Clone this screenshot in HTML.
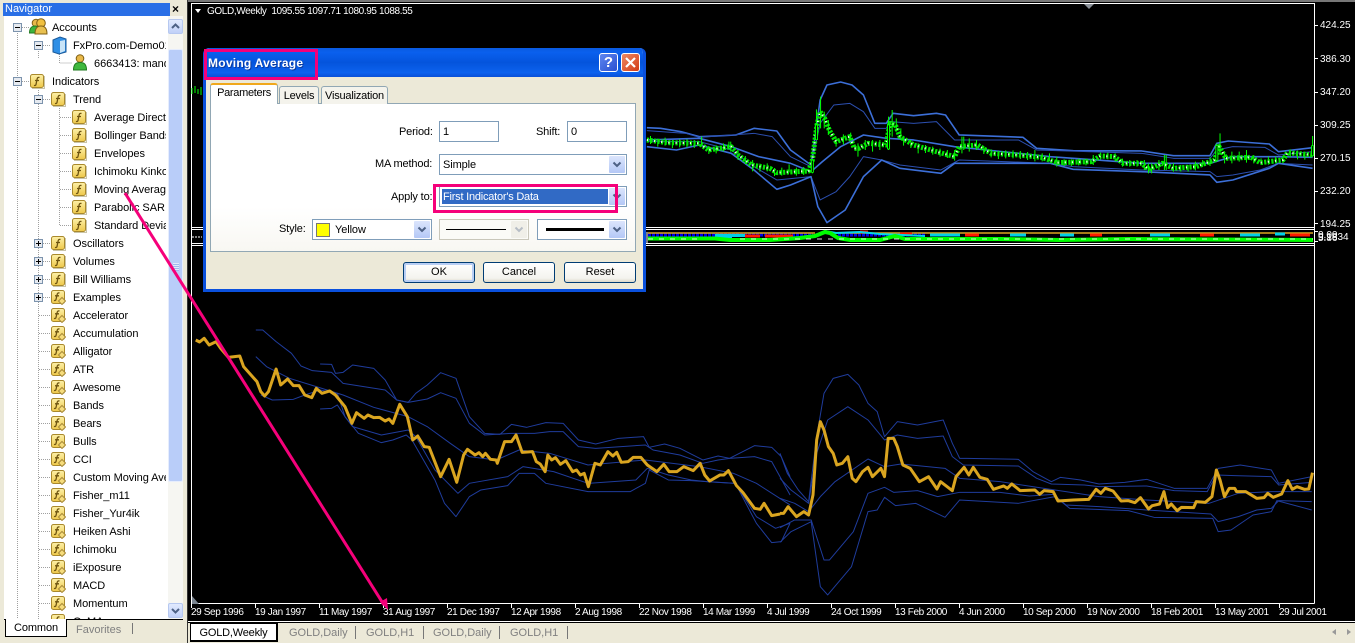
<!DOCTYPE html>
<html><head><meta charset="utf-8"><title>Moving Average</title>
<style>
html,body{margin:0;padding:0;background:#000;width:1355px;height:643px;overflow:hidden}
body{position:relative;font-family:"Liberation Sans",sans-serif;font-size:11px;color:#000}
.a{position:absolute;white-space:nowrap}
#nav{position:absolute;left:0;top:0;width:188px;height:643px;background:#ece9d8;overflow:hidden}
#tree{position:absolute;left:4px;top:16px;width:179px;height:603px;background:#fff;overflow:hidden}
.r{position:absolute;white-space:nowrap;line-height:14px;height:15px;margin-top:1px;overflow:hidden;letter-spacing:-.05px}
.w{color:#fff;font-size:10px;line-height:12px;letter-spacing:-.38px}
.n{color:#fff;font-size:10px;line-height:12px}
.p{stroke-linejoin:round;fill:none;vector-effect:non-scaling-stroke}
.o{stroke:#daa520;stroke-width:3}
.b{stroke:#1f3c9c;stroke-width:1}
.t{stroke:#3c6fd8;stroke-width:1.6}
.t2{stroke:#2c4fb0;stroke-width:1}
.tab{position:absolute;font-size:11px;line-height:14px;white-space:nowrap}
.in{position:absolute;background:#fff;border:1px solid #7f9db9;box-sizing:border-box;font-size:11px;line-height:20px;padding-left:3px;height:21px;letter-spacing:-.1px}
.ar{position:absolute;right:1px;top:1px;width:16px;height:17px;background:linear-gradient(#dbe5fc,#b4c8f6);border-radius:1px}
.btn{position:absolute;top:262px;width:72px;height:21px;box-sizing:border-box;border:1px solid #003c74;border-radius:3px;background:linear-gradient(#fff,#f4f3ee 80%,#dcd8ca);text-align:center;line-height:19px;font-size:11px}
.lb{position:absolute;font-size:11px;line-height:14px;text-align:right;white-space:nowrap;letter-spacing:-.15px}
</style></head><body>
<svg width="0" height="0" style="position:absolute">
<defs>
<linearGradient id="gy" x1="0" y1="0" x2="0" y2="1"><stop offset="0" stop-color="#fdf0a8"/><stop offset="1" stop-color="#eec84a"/></linearGradient>
<symbol id="f" viewBox="0 0 15 15"><rect x=".5" y=".5" width="13" height="13" rx="2" fill="url(#gy)" stroke="#a9892c"/><path d="M14.500 2V14.500H2" fill="none" stroke="#c9c4a8"/><path d="M9.500 3.500C8 3 7.300 3.800 7 5.500L6 10.500C5.800 11.500 5 11.700 4 11.400M5 6.500H9" fill="none" stroke="#6e5410" stroke-width="1.300"/></symbol>
<symbol id="fd" viewBox="0 0 15 15"><rect x=".5" y=".5" width="13" height="13" rx="2" fill="url(#gy)" stroke="#a9892c"/><path d="M8.500 3C7 2.600 6.300 3.400 6 5L5 9.500C4.800 10.500 4 10.700 3 10.400M4 5.800H8" fill="none" stroke="#6e5410" stroke-width="1.300"/><path d="M11 7.500L14.500 11 11 14.500 7.500 11Z" fill="#f6dc7c" stroke="#a88a3a"/></symbol>
<symbol id="chev" viewBox="0 0 16 17"><path d="M4.500 6.500L8 10 11.500 6.500" fill="none" stroke="#4d6185" stroke-width="2"/></symbol>
</defs></svg>

<!-- chart -->
<svg class="a" style="left:188px;top:0" width="1167" height="643" viewBox="188 0 1167 643">
<rect x="188" y="0" width="1167" height="643" fill="#000"/>
<rect x="188" y="0" width="1167" height="2" fill="#777"/>
<g stroke="#fff" stroke-width="1" fill="none" shape-rendering="crispEdges">
<path d="M191 3.500H1314.500V603.500M191.500 3V603.500H1314.500M191 227.500H1314M191 229.500H1314M191 243.500H1314M191 245.500H1314"/>
<path d="M1314 25.500h4M1314 58.500h4M1314 92.500h4M1314 125.500h4M1314 158.500h4M1314 191.500h4M1314 223.500h4M1314 231.500h4M1314 241.500h4"/>
<path d="M191.500 604v4M255.500 604v4M319.500 604v4M383.500 604v4M447.500 604v4M511.500 604v4M575.500 604v4M639.500 604v4M703.500 604v4M767.500 604v4M831.500 604v4M895.500 604v4M959.500 604v4M1023.500 604v4M1087.500 604v4M1151.500 604v4M1215.500 604v4M1279.500 604v4"/>
<path d="M188 621.500H1355"/>
</g>
<path d="M1084 4h10l-5 5z" fill="#8a9098"/>
<path d="M192 596v8h7z" fill="#7b8590"/>
<path d="M195 9h6l-3 4z" fill="#fff"/>

<!-- top candles left bit -->
<path d="M192 88v6M195 86v7M198 89v5M201 87v8" stroke="#00ff00" stroke-width="1"/>

<!-- top panel -->
<g transform="translate(640,0) scale(.456,.3333)">
<polyline class="p t" points="15,383 45,385 90,395 130,410 170,408 210,405 250,385 300,393 330,450 375,495 385,400 395,300 410,255 440,246 465,255 490,285 515,370 540,370 555,340 600,347 650,340 670,345 700,405 760,408 840,412 870,445 950,452 1100,453 1170,467 1250,467 1265,430 1290,423 1380,432 1400,455 1475,443"/>
<polyline class="p t2" points="15,392 100,400 130,412 250,400 290,410 330,470 375,500 395,370 425,315 460,310 490,335 515,385 540,385 550,365 600,370 650,365 690,420 830,420 870,450 1100,460 1170,475 1250,475 1265,450 1300,440 1370,442 1400,465 1475,455"/>
<polyline class="p t" points="15,420 130,415 200,440 260,470 330,490 375,515 400,485 440,440 490,405 540,415 600,420 690,440 760,450 900,470 1000,480 1100,490 1250,490 1300,470 1400,470 1475,472"/>
<polyline class="p t2" points="15,425 130,425 200,450 250,500 300,540 375,530 395,600 430,575 460,530 490,470 530,480 570,495 660,510 700,480 800,485 900,490 950,500 1100,510 1250,515 1265,530 1300,525 1360,510 1400,490 1475,495"/>
<polyline class="p t" points="15,440 80,450 130,435 200,460 250,510 300,568 330,555 375,530 390,620 410,668 450,630 490,530 530,480 570,505 660,520 690,490 900,490 950,508 1100,515 1250,525 1265,547 1300,540 1380,505 1400,490 1475,505"/>
<path class="p" stroke="#00ff00" stroke-width="1" d="M23 408V432M39 416V440M55 413V437M71 420V444M87 418V442M103 418V442M119 420V444M135 410V440M151 438V462M167 436V460M183 430V454M199 425V455M215 450V480M231 468V492M247 480V514M263 491V515M279 490V514M295 504V528M311 503V527M327 493V517M343 503V527M359 501V525M430 410V440M446 403V433M462 398V422M478 430V470M494 420V450M510 420V455M526 420V450M578 413V437M594 420V444M610 430V460M626 435V459M642 440V464M658 446V470M674 450V474M690 450V482M706 410V460M722 415V455M738 420V450M754 438V462M770 448V472M786 453V477M802 451V475M818 451V475M834 453V477M850 456V480M866 450V484M882 460V484M898 460V484M914 470V500M930 478V498M946 478V498M962 476V496M978 476V496M994 465V495M1010 458V478M1026 458V478M1042 460V484M1058 476V500M1074 480V500M1090 480V500M1106 480V510M1122 490V520M1138 480V510M1154 465V510M1170 490V515M1186 495V515M1202 495V515M1218 485V511M1234 480V500M1250 472V498M1282 455V490M1298 455V490M1314 455V485M1330 450V488M1346 465V490M1362 475V495M1378 470V494M1394 470V490M1410 470V490M1426 448V472M1442 452V478M1458 455V479"/>
<polyline class="p" stroke="#00e800" stroke-width="5" stroke-dasharray="2.200 1.400" points="15,420 60,428 130,430 150,450 200,440 215,465 245,495 285,505 300,518 370,513 378,480 388,375 395,335 405,355 415,390 430,425 460,410 470,445 480,445 500,430 540,435 548,370 560,375 570,410 600,435 650,455 690,470 700,440 740,435 770,460 830,465 880,472 915,488 990,485 1010,468 1040,470 1060,490 1100,490 1115,508 1145,490 1170,505 1220,500 1260,480 1270,440 1285,475 1340,472 1360,488 1410,480 1420,458 1475,465"/>
<polyline class="p" stroke="#e8ffe8" stroke-width="2" stroke-dasharray="1.200 6" points="15,420 60,428 130,430 150,450 200,440 215,465 245,495 285,505 300,518 370,513 378,480 388,375 395,335 405,355 415,390 430,425 460,410 470,445 480,445 500,430 540,435 548,370 560,375 570,410 600,435 650,455 690,470 700,440 740,435 770,460 830,465 880,472 915,488 990,485 1010,468 1040,470 1060,490 1100,490 1115,508 1145,490 1170,505 1220,500 1260,480 1270,440 1285,475 1340,472 1360,488 1410,480 1420,458 1475,465"/>
<path class="p" stroke="#00ff00" stroke-width="1" d="M378 478V520M387 328V420M396 290V385M404 335V385M413 360V405M545 350V450M553 330V410M562 355V395M572 385V420M1115 490V520M1150 465V510M1272 400V465M1265 430V485M1475 408V470M710 410V450M195 425V445"/>
<path class="p" stroke="#00ff00" stroke-width="3" d="M378 480V518M387 372V420M545 372V448M1265 435V482M1475 436V468"/>
<path class="p" stroke="#000" stroke-width="1" d="M378 482V516M387 376V418M545 376V446M1265 438V480M1475 438V466"/>
</g>

<!-- indicator panel -->
<g fill="none">
<path d="M648 234.500H813" stroke="#0000e8" stroke-width="4" stroke-dasharray="3 1"/>
<path d="M838 234.500H925" stroke="#0000e8" stroke-width="4" stroke-dasharray="3 1"/>
<path d="M648 233H815M835 233H1313" stroke="#daa520" stroke-width="1.500"/>
<path d="M715 235.500h30M720 237h12M752 236h8M930 235h30M1010 235h16M1060 235h14M1150 235h20M1240 235h20M1275 234h10" stroke="#00d0e8" stroke-width="3"/>
<path d="M745 236h15M765 236h28M860 232h8M900 234h12M965 235h14M1090 235h12M1200 235h14M1290 235h20" stroke="#ff1a00" stroke-width="3"/>
<path d="M810 237L825 231 836 233 860 232 880 234 925 236" stroke="#00d8e8" stroke-width="2"/>
<path d="M648 238.500H715L730 240H770L800 238 815 236 825 232 830 233 838 238 850 240 880 240 895 236 905 239 1000 239 1060 240 1130 239 1313 240" stroke="#00ff00" stroke-width="4"/>
<path d="M648 239H700M740 239H1313" stroke="#fff" stroke-width="1" stroke-dasharray="5 6" opacity=".85"/>
<path d="M647 243V232" stroke="#fff" stroke-width="1"/>
<path d="M192 237h10" stroke="#fff" stroke-width="1" stroke-dasharray="2 1"/>
</g>

<!-- main panel left -->
<g transform="translate(190,320) scale(.3827,.3333)">
<polyline class="p b" points="172,30 190,30 225,65 265,100 290,138 320,152 370,157 400,190 510,210 540,240 570,247 620,237 655,218 695,235 730,310 770,345 840,340 900,340 940,335 975,335 1015,380 1060,385 1190,375 1210,390 1280,405 1340,430 1380,420 1410,415 1475,410 1520,425 1568,525"/>
<polyline class="p b" points="340,132 370,133 380,160 400,157 425,135 480,145 510,180 540,240 570,247 590,220 620,195 655,158 695,175 730,290 770,340 810,343 840,313 880,322 930,308 975,310 1015,360 1060,372 1120,355 1185,350 1200,382 1240,372 1280,385 1340,420 1380,408 1410,415 1475,377 1520,382 1545,410 1568,470"/>
<polyline class="p b" points="172,110 200,140 260,175 330,200 400,225 480,262 570,290 620,320 680,370 730,410 800,420 860,390 940,400 1040,435 1190,420 1330,440 1420,460 1480,490 1568,555"/>
<polyline class="p b" points="185,225 215,240 270,238 300,225 340,210 385,220 405,290 425,320 500,345 570,330 590,350 640,450 700,520 730,490 830,470 870,440 950,455 1040,490 1165,480 1195,445 1250,465 1310,480 1350,485 1425,490 1480,590 1530,625 1568,610"/>
<polyline class="p b" points="340,267 370,265 385,255 405,290 440,340 500,368 530,360 565,345 580,360 640,480 665,550 695,590 730,530 760,510 830,497 860,460 900,460 930,490 1040,515 1150,515 1190,490 1200,450 1250,480 1310,482 1350,485 1425,490 1480,610 1520,668 1545,665 1568,610"/>
<polyline class="p o" points="15,60 25,66 37,55 50,75 68,65 80,85 100,112 130,108 140,140 175,185 185,215 195,228 205,215 225,147 237,195 255,177 270,197 285,197 300,225 318,233 330,205 345,220 365,213 380,225 405,260 423,310 435,278 455,295 465,285 480,293 495,292 510,303 520,297 530,310 548,253 568,290 582,360 595,348 612,380 625,382 655,470 677,418 697,487 715,405 725,388 745,405 755,398 765,410 772,400 785,418 800,420 803,430 822,365 840,365 852,345 868,397 895,395 905,425 915,432 928,455 935,405 945,420 955,413 968,433 982,422 1000,455 1010,450 1020,465 1030,460 1041,500 1058,430 1072,435 1092,395 1105,408 1115,397 1127,427 1145,425 1158,412 1178,412 1195,435 1220,455 1238,433 1252,455 1272,455 1290,440 1315,452 1333,430 1345,465 1358,483 1385,465 1395,465 1407,452 1428,497 1445,518 1475,565 1490,568 1500,550 1520,587 1542,582"/>
</g>
<!-- main panel right -->
<g transform="translate(780,360) scale(.3667,.3333)">
<polyline class="p b" points="0,280 20,340 50,390 78,425 100,230 120,100 145,55 185,43 215,75 240,130 265,155 285,230 320,185 375,195 445,180 470,250 490,295 510,295 650,298 690,335 740,365 765,352 820,360 870,372 940,367 1000,358 1075,385 1165,385 1195,325 1255,315 1340,330 1360,370 1450,350"/>
<polyline class="p b" points="0,355 30,390 78,430 100,280 130,180 185,140 240,180 285,240 320,225 375,235 445,228 470,290 500,315 650,318 700,355 740,372 830,375 870,380 1000,378 1075,392 1165,395 1190,345 1240,347 1340,350 1360,375 1450,367"/>
<polyline class="p b" points="0,415 40,430 78,455 110,410 150,365 240,297 285,320 330,312 450,325 490,355 600,365 750,390 870,410 1000,420 1170,430 1250,400 1340,395 1450,395"/>
<polyline class="p b" points="0,503 40,480 85,480 120,600 135,600 200,515 240,400 285,382 310,397 375,392 430,410 490,397 600,397 680,408 745,403 780,435 870,440 1000,450 1175,462 1195,485 1250,470 1300,450 1340,445 1360,422 1450,425"/>
<polyline class="p b" points="0,547 30,515 85,485 110,680 130,705 195,620 240,455 265,450 285,412 315,437 370,430 450,472 490,420 650,430 750,410 790,445 950,452 1020,472 1180,475 1195,515 1230,510 1290,465 1340,455 1355,422 1450,450"/>
<polyline class="p o" points="0,460 10,460 22,440 45,470 65,455 78,465 90,405 100,240 110,185 120,210 132,260 145,280 155,315 170,310 185,290 197,355 207,365 225,335 240,322 252,350 275,325 285,350 295,235 310,235 320,260 335,315 355,325 380,365 405,350 428,387 438,365 470,392 480,350 502,322 515,345 527,322 545,352 565,358 582,388 610,378 620,385 632,372 655,392 695,390 708,403 720,392 745,395 758,423 800,420 842,418 862,388 875,400 887,385 908,393 930,423 950,422 968,428 983,413 1005,447 1015,437 1035,432 1047,395 1057,443 1067,432 1083,452 1095,442 1128,443 1135,425 1160,427 1178,410 1190,330 1200,360 1212,410 1225,385 1240,385 1245,395 1270,395 1300,415 1320,413 1330,400 1345,412 1368,402 1385,362 1397,388 1410,380 1430,388 1442,387 1452,338"/>
</g>
</svg>

<!-- chart text -->
<div class="a w" style="left:207px;top:6px">GOLD,Weekly&nbsp; 1095.55 1097.71 1080.95 1088.55</div>
<div class="a n" style="left:1320px;top:20px">424.25</div>
<div class="a n" style="left:1320px;top:54px">386.30</div>
<div class="a n" style="left:1320px;top:87px">347.20</div>
<div class="a n" style="left:1320px;top:120px">309.25</div>
<div class="a n" style="left:1320px;top:153px">270.15</div>
<div class="a n" style="left:1320px;top:186px">232.20</div>
<div class="a n" style="left:1320px;top:219px">194.25</div>
<div class="a n" style="left:1318px;top:230px">0.00</div>
<div class="a n" style="left:1318px;top:232px">9.1834</div>
<div class="a n" style="left:1318px;top:233px">5.86</div>
<div class="a w" style="left:191px;top:607px">29 Sep 1996</div>
<div class="a w" style="left:255px;top:607px">19 Jan 1997</div>
<div class="a w" style="left:319px;top:607px">11 May 1997</div>
<div class="a w" style="left:383px;top:607px">31 Aug 1997</div>
<div class="a w" style="left:447px;top:607px">21 Dec 1997</div>
<div class="a w" style="left:511px;top:607px">12 Apr 1998</div>
<div class="a w" style="left:575px;top:607px">2 Aug 1998</div>
<div class="a w" style="left:639px;top:607px">22 Nov 1998</div>
<div class="a w" style="left:703px;top:607px">14 Mar 1999</div>
<div class="a w" style="left:767px;top:607px">4 Jul 1999</div>
<div class="a w" style="left:831px;top:607px">24 Oct 1999</div>
<div class="a w" style="left:895px;top:607px">13 Feb 2000</div>
<div class="a w" style="left:959px;top:607px">4 Jun 2000</div>
<div class="a w" style="left:1023px;top:607px">10 Sep 2000</div>
<div class="a w" style="left:1087px;top:607px">19 Nov 2000</div>
<div class="a w" style="left:1151px;top:607px">18 Feb 2001</div>
<div class="a w" style="left:1215px;top:607px">13 May 2001</div>
<div class="a w" style="left:1279px;top:607px">29 Jul 2001</div>

<!-- bottom tabs -->
<div class="a" style="left:188px;top:623px;width:1167px;height:20px;background:#ece9d8"></div>
<div class="a" style="left:190px;top:623px;width:88px;height:19px;background:#fff;border:1px solid #000;border-right-width:2px;border-bottom-width:2px;box-sizing:border-box;text-align:center;line-height:18px;font-size:11px;letter-spacing:-.2px">GOLD,Weekly</div>
<div class="tab" style="left:289px;top:626px;color:#808080">GOLD,Daily</div>
<div class="tab" style="left:366px;top:626px;color:#808080">GOLD,H1</div>
<div class="tab" style="left:433px;top:626px;color:#808080">GOLD,Daily</div>
<div class="tab" style="left:510px;top:626px;color:#808080">GOLD,H1</div>
<svg class="a" style="left:188px;top:623px" width="1167" height="20" viewBox="188 623 1167 20">
<path d="M355.500 626v13M423.500 626v13M499.500 626v13M567.500 626v13" stroke="#777" shape-rendering="crispEdges"/>
<path d="M1336 629l-4 3 4 3zM1347 629l4 3-4 3z" fill="#999"/>
</svg>

<!-- navigator -->
<div id="nav">
<div class="a" style="left:3px;top:3px;width:167px;height:13px;background:#2a6fe6;color:#fff;font-size:11px;line-height:12px;padding-left:2px;box-sizing:border-box">Navigator</div>
<div class="a" style="left:172px;top:3px;font-weight:bold;font-size:12px;line-height:13px">×</div>
<div class="a" style="left:187px;top:0;width:1px;height:643px;background:#333"></div>
<div id="tree">
<svg class="a" style="left:-4px;top:-16px" width="183" height="640" viewBox="0 0 183 640">
<g stroke="#a0a0a0" stroke-dasharray="1 1" fill="none" shape-rendering="crispEdges">
<path d="M17.500 27V620M38.500 45V58M59.500 54V63H72M38.500 90V620M59.500 108V225M22 27.500H30M43 45.500H51M22 81.500H30M43 99.500H51"/>
<path d="M60 117.500H72M60 135.500H72M60 153.500H72M60 171.500H72M60 189.500H72M60 207.500H72M60 225.500H72"/>
<path d="M43 243.500H51M43 261.500H51M43 279.500H51M43 297.500H51M39 315.500H51M39 333.500H51M39 351.500H51M39 369.500H51M39 387.500H51M39 405.500H51M39 423.500H51M39 441.500H51M39 459.500H51M39 477.500H51M39 495.500H51M39 513.500H51M39 531.500H51M39 549.500H51M39 567.500H51M39 585.500H51M39 603.500H51"/>
</g>
<g fill="#e6eaf0" stroke="#7c93ad" shape-rendering="crispEdges">
<rect x="13.500" y="23.500" width="8" height="8"/><rect x="34.500" y="41.500" width="8" height="8"/><rect x="13.500" y="77.500" width="8" height="8"/><rect x="34.500" y="95.500" width="8" height="8"/><rect x="34.500" y="239.500" width="8" height="8"/><rect x="34.500" y="257.500" width="8" height="8"/><rect x="34.500" y="275.500" width="8" height="8"/><rect x="34.500" y="293.500" width="8" height="8"/>
</g>
<path d="M15 27.500h5M36 45.500h5M15 81.500h5M36 99.500h5M36 243.500h5M36 261.500h5M36 279.500h5M36 297.500h5M38.500 241v5M38.500 259v5M38.500 277v5M38.500 295v5" stroke="#000" shape-rendering="crispEdges"/>
<!-- accounts icon -->
<circle cx="36" cy="23" r="3.800" fill="#e8b84a" stroke="#7f5f14"/><path d="M29.500 33c0-5 2.500-7 5.500-7s5 2 5 7z" fill="#3db43d" stroke="#1f7a1f"/>
<circle cx="41" cy="23" r="4.300" fill="#f0c040" stroke="#7f5f14"/><path d="M35 34c0-6 2.500-8 6-8s6 2 6 8z" fill="#e8c050" stroke="#7f5f14"/>
<!-- server icon -->
<path d="M53 40l7-3 6 2v13l-7 2-6-2z" fill="#2f8fe6" stroke="#1a5a9a"/><path d="M60 41l5-1v11l-5 2z" fill="#c8e4f8"/>
<!-- user icon -->
<circle cx="80" cy="58.500" r="3.800" fill="#e8b84a" stroke="#7f5f14"/><path d="M73.500 70c0-6 2.500-7.500 6.500-7.500s6.500 1.500 6.500 7.500z" fill="#3fb83f" stroke="#1f7a1f"/>
<use href="#f" x="30" y="74" width="15" height="15"/>
<use href="#f" x="51" y="92" width="15" height="15"/>
<use href="#f" x="72" y="110" width="15" height="15"/>
<use href="#f" x="72" y="128" width="15" height="15"/>
<use href="#f" x="72" y="146" width="15" height="15"/>
<use href="#f" x="72" y="164" width="15" height="15"/>
<use href="#f" x="72" y="182" width="15" height="15"/>
<use href="#f" x="72" y="200" width="15" height="15"/>
<use href="#f" x="72" y="218" width="15" height="15"/>
<use href="#f" x="51" y="236" width="15" height="15"/>
<use href="#f" x="51" y="254" width="15" height="15"/>
<use href="#f" x="51" y="272" width="15" height="15"/>
<use href="#fd" x="51" y="290" width="15" height="15"/>
<use href="#fd" x="51" y="308" width="15" height="15"/>
<use href="#fd" x="51" y="326" width="15" height="15"/>
<use href="#fd" x="51" y="344" width="15" height="15"/>
<use href="#fd" x="51" y="362" width="15" height="15"/>
<use href="#fd" x="51" y="380" width="15" height="15"/>
<use href="#fd" x="51" y="398" width="15" height="15"/>
<use href="#fd" x="51" y="416" width="15" height="15"/>
<use href="#fd" x="51" y="434" width="15" height="15"/>
<use href="#fd" x="51" y="452" width="15" height="15"/>
<use href="#fd" x="51" y="470" width="15" height="15"/>
<use href="#fd" x="51" y="488" width="15" height="15"/>
<use href="#fd" x="51" y="506" width="15" height="15"/>
<use href="#fd" x="51" y="524" width="15" height="15"/>
<use href="#fd" x="51" y="542" width="15" height="15"/>
<use href="#fd" x="51" y="560" width="15" height="15"/>
<use href="#fd" x="51" y="578" width="15" height="15"/>
<use href="#fd" x="51" y="596" width="15" height="15"/>
<use href="#fd" x="51" y="614" width="15" height="15"/>
</svg>
<div class="r" style="left:48px;top:4px">Accounts</div>
<div class="r" style="left:69px;top:22px;width:93px">FxPro.com-Demo01</div>
<div class="r" style="left:90px;top:40px;width:72px">6663413: mandarine</div>
<div class="r" style="left:48px;top:58px">Indicators</div>
<div class="r" style="left:69px;top:76px">Trend</div>
<div class="r" style="left:90px;top:94px;width:72px">Average Directional</div>
<div class="r" style="left:90px;top:112px;width:72px">Bollinger Bands</div>
<div class="r" style="left:90px;top:130px;width:72px">Envelopes</div>
<div class="r" style="left:90px;top:148px;width:72px">Ichimoku Kinko</div>
<div class="r" style="left:90px;top:166px;width:72px">Moving Average</div>
<div class="r" style="left:90px;top:184px;width:72px">Parabolic SAR</div>
<div class="r" style="left:90px;top:202px;width:72px">Standard Deviation</div>
<div class="r" style="left:69px;top:220px">Oscillators</div>
<div class="r" style="left:69px;top:238px">Volumes</div>
<div class="r" style="left:69px;top:256px">Bill Williams</div>
<div class="r" style="left:69px;top:274px">Examples</div>
<div class="r" style="left:69px;top:292px">Accelerator</div>
<div class="r" style="left:69px;top:310px">Accumulation</div>
<div class="r" style="left:69px;top:328px">Alligator</div>
<div class="r" style="left:69px;top:346px">ATR</div>
<div class="r" style="left:69px;top:364px">Awesome</div>
<div class="r" style="left:69px;top:382px">Bands</div>
<div class="r" style="left:69px;top:400px">Bears</div>
<div class="r" style="left:69px;top:418px">Bulls</div>
<div class="r" style="left:69px;top:436px">CCI</div>
<div class="r" style="left:69px;top:454px;width:93px">Custom Moving Average</div>
<div class="r" style="left:69px;top:472px">Fisher_m11</div>
<div class="r" style="left:69px;top:490px">Fisher_Yur4ik</div>
<div class="r" style="left:69px;top:508px">Heiken Ashi</div>
<div class="r" style="left:69px;top:526px">Ichimoku</div>
<div class="r" style="left:69px;top:544px">iExposure</div>
<div class="r" style="left:69px;top:562px">MACD</div>
<div class="r" style="left:69px;top:580px">Momentum</div>
<div class="r" style="left:69px;top:598px">OsMA</div>
<!-- scrollbar -->
<div class="a" style="left:164px;top:0;width:15px;height:603px;background:#f6f6f2"></div>
<div class="a" style="left:164px;top:33px;width:15px;height:433px;background:#b9cdf9;border:1px solid #e6edfd;box-sizing:border-box;border-radius:2px"></div>
<div class="a" style="left:169px;top:247px;width:6px;height:8px;background:repeating-linear-gradient(#e2eafc 0 1px,#9fb8ee 1px 2px)"></div>
<div class="a" style="left:164px;top:3px;width:15px;height:15px;background:linear-gradient(#e1eafe,#c0d0f8);border:1px solid #b6c8f0;box-sizing:border-box;border-radius:2px"><svg width="13" height="13" viewBox="0 0 13 13" style="display:block"><path d="M3 8l3.500-3.500L10 8" fill="none" stroke="#4d6185" stroke-width="2"/></svg></div>
<div class="a" style="left:164px;top:587px;width:15px;height:15px;background:linear-gradient(#e1eafe,#c0d0f8);border:1px solid #b6c8f0;box-sizing:border-box;border-radius:2px"><svg width="13" height="13" viewBox="0 0 13 13" style="display:block"><path d="M3 5l3.500 3.500L10 5" fill="none" stroke="#4d6185" stroke-width="2"/></svg></div>
</div>
<div class="a" style="left:4px;top:619px;width:179px;height:1px;background:#000"></div>
<div class="a" style="left:5px;top:619px;width:62px;height:18px;background:#fff;border:1px solid #000;border-top:none;box-sizing:border-box;text-align:center;line-height:18px;letter-spacing:-.1px">Common</div>
<div class="a" style="left:76px;top:623px;color:#808080;line-height:14px">Favorites</div>
<div class="a" style="left:132px;top:623px;width:1px;height:11px;background:#777"></div>
</div>

<!-- dialog -->
<div class="a" style="left:203px;top:48px;width:443px;height:244px;background:#ece9d8;border:3px solid #0a50dc;border-top:none;box-sizing:border-box;border-radius:6px 6px 0 0;overflow:hidden">
<div class="a" style="left:-3px;top:0;width:443px;height:29px;background:linear-gradient(#0a5ae0,#0a60ee 15%,#0454dc 50%,#0c62ee 85%,#0a50d8)"></div>
</div>
<div class="a" style="left:208px;top:56px;color:#fff;font-weight:bold;font-size:12px;line-height:15px;letter-spacing:.25px;text-shadow:1px 1px 0 #0a3aa0">Moving Average</div>
<div class="a" style="left:599px;top:53px;width:19px;height:19px;box-sizing:border-box;border:1px solid #fff;border-radius:3px;background:linear-gradient(135deg,#5d86f0,#2a50d0);color:#fff;font-weight:bold;font-size:15px;line-height:17px;text-align:center">?</div>
<div class="a" style="left:621px;top:53px;width:19px;height:19px;box-sizing:border-box;border:1px solid #fff;border-radius:3px;background:linear-gradient(135deg,#ee8a64,#d23a14)"><svg width="17" height="17" viewBox="0 0 17 17" style="display:block"><path d="M4 4l9 9M13 4l-9 9" stroke="#fff" stroke-width="2.200"/></svg></div>

<div class="a" style="left:210px;top:103px;width:426px;height:149px;background:linear-gradient(#fff,#fff 70%,#f8f7f2);border:1px solid #91a7b4;box-sizing:border-box"></div>
<div class="a" style="left:279px;top:86px;width:40px;height:18px;background:#f4f3ec;border:1px solid #91a7b4;border-bottom:none;box-sizing:border-box;border-radius:3px 3px 0 0;text-align:center;line-height:18px;letter-spacing:-.2px">Levels</div>
<div class="a" style="left:321px;top:86px;width:67px;height:18px;background:#f4f3ec;border:1px solid #91a7b4;border-bottom:none;box-sizing:border-box;border-radius:3px 3px 0 0;text-align:center;line-height:18px;letter-spacing:-.2px">Visualization</div>
<div class="a" style="left:210px;top:83px;width:68px;height:21px;background:#fff;border:1px solid #91a7b4;border-bottom:none;border-top:2px solid #f0a81c;box-sizing:border-box;border-radius:3px 3px 0 0;text-align:center;line-height:17px;letter-spacing:-.3px">Parameters</div>

<div class="lb" style="left:399px;top:125px">Period:</div>
<div class="in" style="left:439px;top:121px;width:60px">1</div>
<div class="lb" style="left:536px;top:125px">Shift:</div>
<div class="in" style="left:567px;top:121px;width:60px">0</div>
<div class="lb" style="left:375px;top:157px">MA method:</div>
<div class="in" style="left:439px;top:154px;width:188px">Simple<div class="ar"><svg width="16" height="17"><use href="#chev"/></svg></div></div>
<div class="lb" style="left:391px;top:190px">Apply to:</div>
<div class="in" style="left:439px;top:186px;width:188px"><div class="a" style="left:2px;top:2px;width:165px;height:15px;background:#316ac5;color:#fff;line-height:17px;padding-left:1px;letter-spacing:-.22px">First Indicator's Data</div><div class="ar"><svg width="16" height="17"><use href="#chev"/></svg></div></div>
<div class="lb" style="left:279px;top:222px">Style:</div>
<div class="in" style="left:312px;top:219px;width:120px;padding-left:22px"><div class="a" style="left:3px;top:3px;width:12px;height:12px;background:#ff0;border:1px solid #777"></div>Yellow<div class="ar"><svg width="16" height="17"><use href="#chev"/></svg></div></div>
<div class="in" style="left:439px;top:219px;width:90px;background:#fbfbf7;border-color:#c9c7ba"><div class="a" style="left:6px;top:9px;width:60px;height:1px;background:#000"></div><div class="ar" style="background:#f0efe8"><svg width="16" height="17" style="opacity:.35"><use href="#chev"/></svg></div></div>
<div class="in" style="left:537px;top:219px;width:90px"><div class="a" style="left:8px;top:8px;width:58px;height:3px;background:#000"></div><div class="ar"><svg width="16" height="17"><use href="#chev"/></svg></div></div>

<div class="btn" style="left:403px;box-shadow:inset 0 0 0 2px #b8cef4">OK</div>
<div class="btn" style="left:483px">Cancel</div>
<div class="btn" style="left:564px">Reset</div>

<!-- annotations -->
<svg class="a" style="left:0;top:0" width="1355" height="643" viewBox="0 0 1355 643">
<g fill="none" stroke="#f5007a" stroke-width="3">
<rect x="205.500" y="50.500" width="111" height="28"/>
<rect x="434.500" y="185.500" width="182" height="26"/>
<path d="M125 193L384 605"/>
</g>
<path d="M388 610L380 602 387 598z" fill="#f5007a"/>
</svg>
</body></html>
